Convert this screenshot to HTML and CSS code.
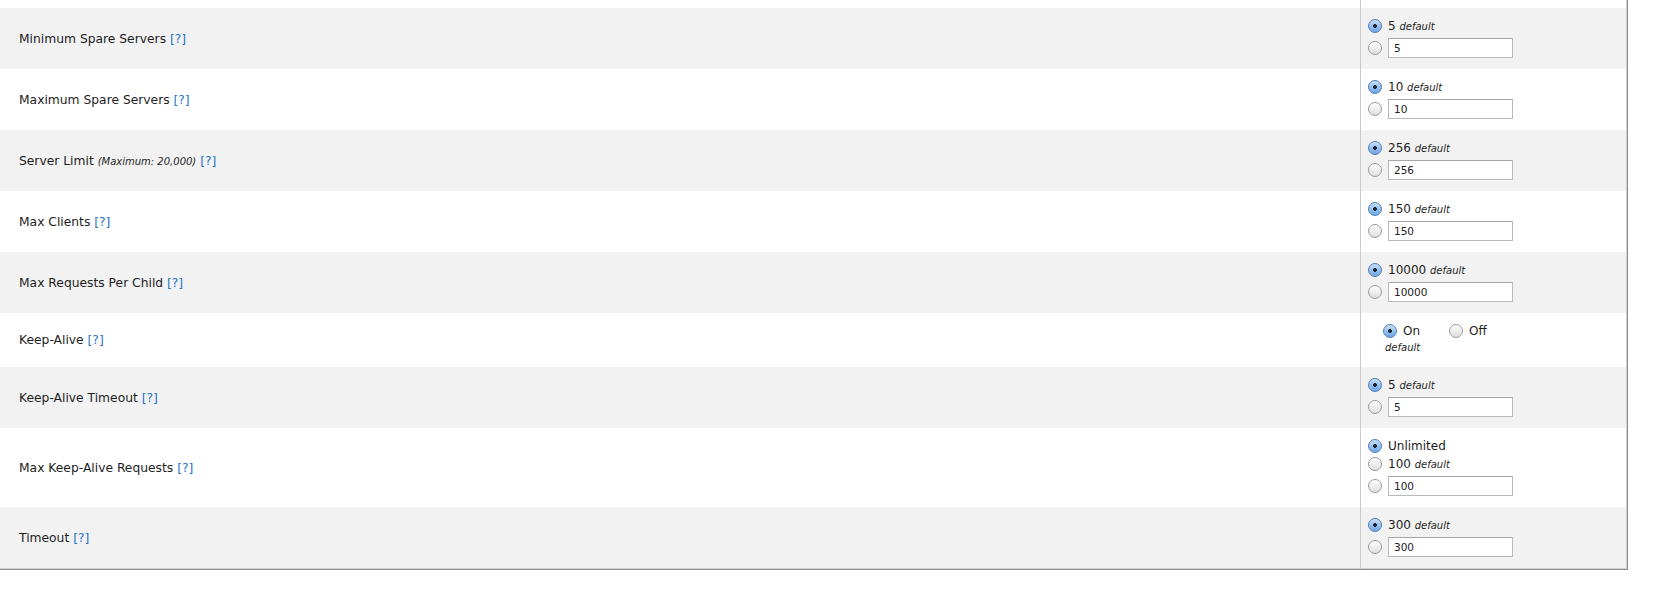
FILE: index.html
```html
<!DOCTYPE html>
<html lang="en">
<head>
    <meta charset="UTF-8">
    <title>Apache Configuration</title>
    <link rel="stylesheet" href="styles.css">
</head>
<body>
    <div class="settings">
        <table>
            <tr class="cut">
                <td class="label"></td>
                <td class="value"></td>
            </tr>
            <tr class="alt">
                <td class="label">Minimum Spare Servers <a href="#">[?]</a></td>
                <td class="value">
                    <label class="opt"><input type="radio" name="minspare" checked><span>5 <em class="def">default</em></span></label>
                    <label class="opt field"><input type="radio" name="minspare"><input type="text" value="5"></label>
                </td>
            </tr>
            <tr>
                <td class="label">Maximum Spare Servers <a href="#">[?]</a></td>
                <td class="value">
                    <label class="opt"><input type="radio" name="maxspare" checked><span>10 <em class="def">default</em></span></label>
                    <label class="opt field"><input type="radio" name="maxspare"><input type="text" value="10"></label>
                </td>
            </tr>
            <tr class="alt">
                <td class="label">Server Limit <em class="note">(Maximum: 20,000)</em> <a href="#">[?]</a></td>
                <td class="value">
                    <label class="opt"><input type="radio" name="serverlimit" checked><span>256 <em class="def">default</em></span></label>
                    <label class="opt field"><input type="radio" name="serverlimit"><input type="text" value="256"></label>
                </td>
            </tr>
            <tr>
                <td class="label">Max Clients <a href="#">[?]</a></td>
                <td class="value">
                    <label class="opt"><input type="radio" name="maxclients" checked><span>150 <em class="def">default</em></span></label>
                    <label class="opt field"><input type="radio" name="maxclients"><input type="text" value="150"></label>
                </td>
            </tr>
            <tr class="alt">
                <td class="label">Max Requests Per Child <a href="#">[?]</a></td>
                <td class="value">
                    <label class="opt"><input type="radio" name="maxreq" checked><span>10000 <em class="def">default</em></span></label>
                    <label class="opt field"><input type="radio" name="maxreq"><input type="text" value="10000"></label>
                </td>
            </tr>
            <tr>
                <td class="label">Keep-Alive <a href="#">[?]</a></td>
                <td class="value keep">
                    <div class="toggle">
                        <div class="choice">
                            <label class="opt"><input type="radio" name="keepalive" checked><span>On</span></label>
                            <em class="def below">default</em>
                        </div>
                        <div class="choice">
                            <label class="opt"><input type="radio" name="keepalive"><span>Off</span></label>
                        </div>
                    </div>
                </td>
            </tr>
            <tr class="alt">
                <td class="label">Keep-Alive Timeout <a href="#">[?]</a></td>
                <td class="value">
                    <label class="opt"><input type="radio" name="katimeout" checked><span>5 <em class="def">default</em></span></label>
                    <label class="opt field"><input type="radio" name="katimeout"><input type="text" value="5"></label>
                </td>
            </tr>
            <tr>
                <td class="label">Max Keep-Alive Requests <a href="#">[?]</a></td>
                <td class="value">
                    <label class="opt"><input type="radio" name="kareq" checked><span>Unlimited</span></label>
                    <label class="opt"><input type="radio" name="kareq"><span>100 <em class="def">default</em></span></label>
                    <label class="opt field"><input type="radio" name="kareq"><input type="text" value="100"></label>
                </td>
            </tr>
            <tr class="alt">
                <td class="label">Timeout <a href="#">[?]</a></td>
                <td class="value">
                    <label class="opt"><input type="radio" name="timeout" checked><span>300 <em class="def">default</em></span></label>
                    <label class="opt field"><input type="radio" name="timeout"><input type="text" value="300"></label>
                </td>
            </tr>
        </table>
    </div>
</body>
</html>
```

FILE: styles.css
```css
body {
    margin: 0;
    font-family: "DejaVu Sans", Verdana, sans-serif;
    font-size: 12px;
    color: #1e1e1e;
    background-color: #fff;
}

.settings {
    width: 1628px;
    box-sizing: border-box;
    border-right: 1px solid #8c8c8c;
    border-bottom: 1px solid #8c8c8c;
}

table {
    width: 100%;
    border-collapse: collapse;
    border-right: 1px solid #d4d4d4;
    border-bottom: 1px solid #d4d4d4;
}

tr.alt {
    background-color: #f2f2f2;
}

tr.cut td {
    height: 8px;
    padding: 0;
}

td.label {
    padding: 0 0 0 19px;
    font-size: 12.3px;
    vertical-align: middle;
}

td.label a {
    color: #2473c6;
    text-decoration: none;
}

.note {
    font-size: 10px;
}

td.value {
    width: 258px;
    border-left: 1px solid #c9c9c9;
    padding: 9px 0 11px 7px;
    vertical-align: top;
}

td.value.keep {
    padding-bottom: 13px;
}

.opt {
    display: flex;
    align-items: center;
    height: 18px;
}

.opt.field {
    height: 20px;
    margin-top: 3px;
}

.def {
    font-size: 10px;
}

.def.below {
    display: block;
    height: 12px;
    line-height: 12px;
    margin: 2px 0 0 2px;
}

.toggle {
    display: flex;
    padding-left: 15px;
}

.choice {
    width: 66px;
}

input[type="radio"] {
    appearance: none;
    -webkit-appearance: none;
    width: 14px;
    height: 14px;
    margin: 0 6px 0 0;
    border: 1px solid #9b9b9b;
    border-radius: 50%;
    background: linear-gradient(#ffffff, #dedede);
    box-sizing: border-box;
    flex-shrink: 0;
}

input[type="radio"]:checked {
    border-color: #5680b4;
    background:
        radial-gradient(circle, #1d2633 0 1.6px, transparent 2.2px),
        linear-gradient(#c6dffa, #6ca5e6);
}

input[type="text"] {
    width: 125px;
    height: 20px;
    box-sizing: border-box;
    margin: 0;
    padding: 0 0 0 5px;
    border: 1px solid #b9b9b9;
    border-top-color: #a6a6a6;
    font-family: "DejaVu Sans", Verdana, sans-serif;
    font-size: 10.5px;
    color: #222;
    background-color: #fff;
}
```
